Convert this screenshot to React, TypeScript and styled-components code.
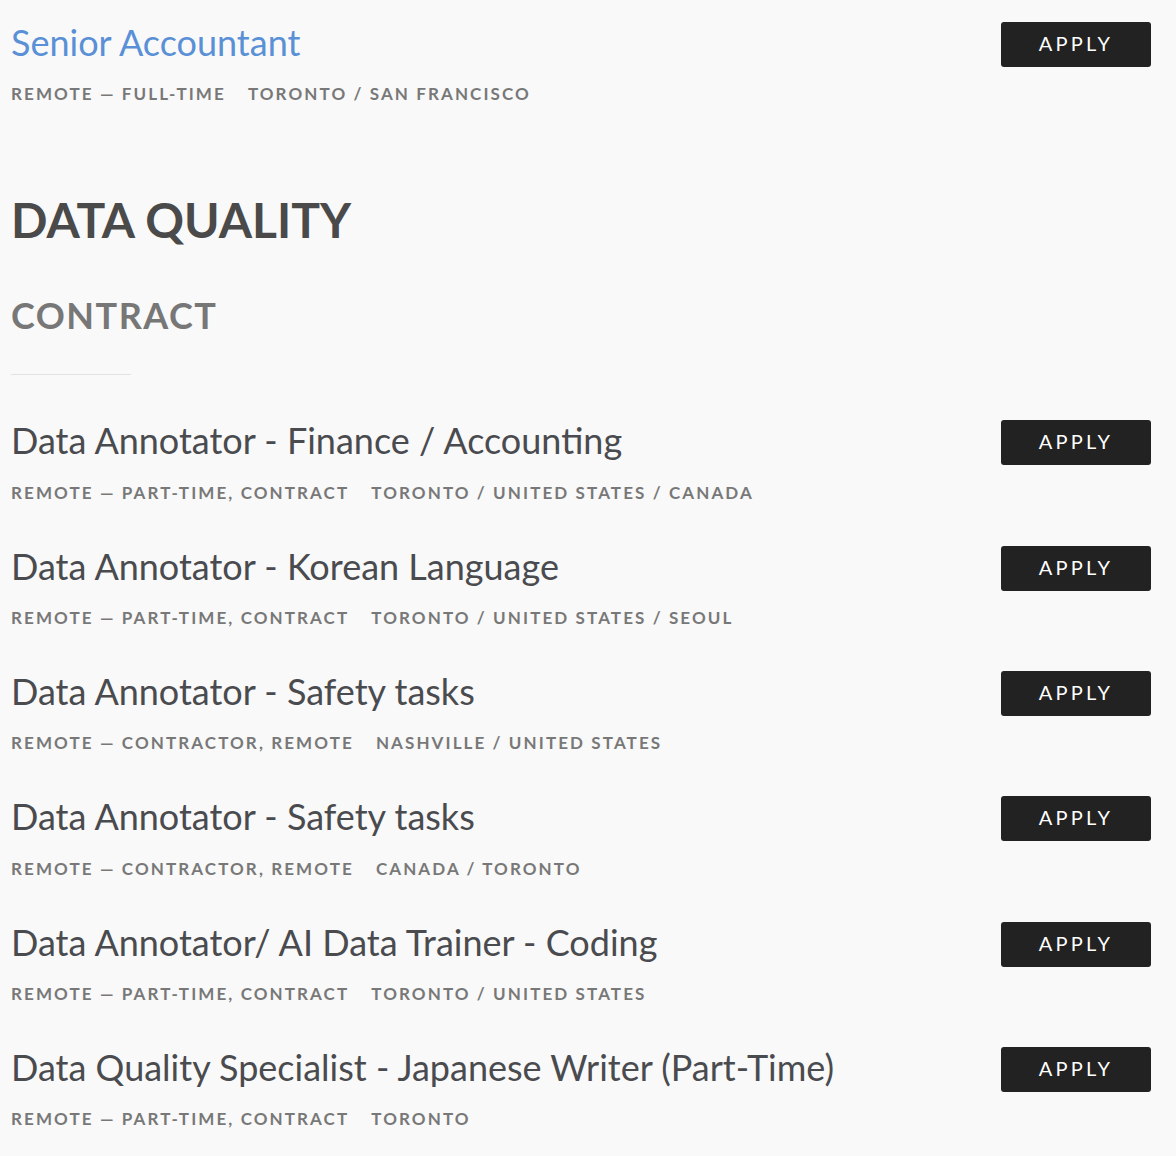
import React from 'react';
import styled, { createGlobalStyle } from 'styled-components';

const GlobalStyle = createGlobalStyle`
    html, body {
        margin: 0;
        padding: 0;
        background: #f9f9f9;
    }
    body {
        font-family: Lato, "Open Sans", sans-serif;
        -webkit-font-smoothing: antialiased;
    }
`;

const Page = styled.div`
    padding: 21px 25px 0 11px;
`;

const JobRow = styled.div<{ first?: boolean }>`
    display: flex;
    justify-content: space-between;
    align-items: flex-start;
    padding-bottom: ${({ first }) => (first ? '0' : '41.8px')};
`;

const JobInfo = styled.div`
    display: flex;
    flex-direction: column;
`;

const JobTitle = styled.a<{ highlight?: boolean }>`
    font-size: 36px;
    line-height: 1.2;
    font-weight: 400;
    color: ${({ highlight }) => (highlight ? '#5a90d6' : '#4a4b4f')};
    text-decoration: none;
`;

const MetaRow = styled.div`
    display: flex;
    gap: 22px;
    margin-top: 20px;
`;

const Meta = styled.span`
    font-size: 17px;
    line-height: 1.2;
    font-weight: 700;
    letter-spacing: 2.1px;
    text-transform: uppercase;
    color: #787878;
`;

const ApplyButton = styled.a`
    display: flex;
    align-items: center;
    justify-content: center;
    width: 150px;
    height: 45px;
    margin-top: 1px;
    padding-bottom: 3px;
    flex-shrink: 0;
    background: #222222;
    border-radius: 3px;
    color: #ffffff;
    font-size: 20px;
    font-weight: 400;
    letter-spacing: 3.2px;
    text-transform: uppercase;
    text-decoration: none;
    box-sizing: border-box;
`;

const Department = styled.h2`
    margin: 86px 0 0;
    font-size: 48px;
    line-height: 1.2;
    font-weight: 700;
    color: #4a4a4a;
    text-transform: uppercase;
`;

const Group = styled.h3`
    margin: 46px 0 0;
    font-size: 36px;
    line-height: 1.2;
    font-weight: 700;
    color: #777777;
    text-transform: uppercase;
    letter-spacing: 1.5px;
`;

const Divider = styled.hr`
    width: 120px;
    margin: 37px 0 44px;
    border: none;
    border-top: 1px solid #e2e2e2;
`;

type Job = {
    title: string;
    type: string;
    location: string;
};

const contractJobs: Job[] = [
    { title: 'Data Annotator - Finance / Accounting', type: 'Remote — Part-time, Contract', location: 'Toronto / United States / Canada' },
    { title: 'Data Annotator - Korean Language', type: 'Remote — Part-time, Contract', location: 'Toronto / United States / Seoul' },
    { title: 'Data Annotator - Safety tasks', type: 'Remote — Contractor, Remote', location: 'Nashville / United States' },
    { title: 'Data Annotator - Safety tasks', type: 'Remote — Contractor, Remote', location: 'Canada / Toronto' },
    { title: 'Data Annotator/ AI Data Trainer - Coding', type: 'Remote — Part-time, Contract', location: 'Toronto / United States' },
    { title: 'Data Quality Specialist - Japanese Writer (Part-Time)', type: 'Remote — Part-time, Contract', location: 'Toronto' },
];

const App: React.FC = () => {
    return (
        <Page>
            <GlobalStyle />
            <JobRow first>
                <JobInfo>
                    <JobTitle highlight href="#">Senior Accountant</JobTitle>
                    <MetaRow>
                        <Meta>Remote — Full-time</Meta>
                        <Meta>Toronto / San Francisco</Meta>
                    </MetaRow>
                </JobInfo>
                <ApplyButton href="#">Apply</ApplyButton>
            </JobRow>

            <Department>Data Quality</Department>
            <Group>Contract</Group>
            <Divider />

            {contractJobs.map((job, index) => (
                <JobRow key={index}>
                    <JobInfo>
                        <JobTitle href="#">{job.title}</JobTitle>
                        <MetaRow>
                            <Meta>{job.type}</Meta>
                            <Meta>{job.location}</Meta>
                        </MetaRow>
                    </JobInfo>
                    <ApplyButton href="#">Apply</ApplyButton>
                </JobRow>
            ))}
        </Page>
    );
};

export default App;
